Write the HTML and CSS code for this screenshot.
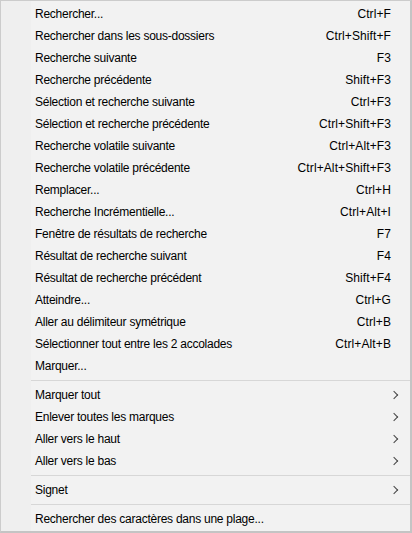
FILE: index.html
```html
<!DOCTYPE html>
<html lang="fr">
<head>
<meta charset="utf-8">
<link rel="stylesheet" href="styles.css">
</head>
<body>
<div class="menu">
  <div class="item"><span class="label">Rechercher...</span><span class="key">Ctrl+F</span></div>
  <div class="item"><span class="label">Rechercher dans les sous-dossiers</span><span class="key">Ctrl+Shift+F</span></div>
  <div class="item"><span class="label">Recherche suivante</span><span class="key">F3</span></div>
  <div class="item"><span class="label">Recherche précédente</span><span class="key">Shift+F3</span></div>
  <div class="item"><span class="label">Sélection et recherche suivante</span><span class="key">Ctrl+F3</span></div>
  <div class="item"><span class="label">Sélection et recherche précédente</span><span class="key">Ctrl+Shift+F3</span></div>
  <div class="item"><span class="label">Recherche volatile suivante</span><span class="key">Ctrl+Alt+F3</span></div>
  <div class="item"><span class="label">Recherche volatile précédente</span><span class="key">Ctrl+Alt+Shift+F3</span></div>
  <div class="item"><span class="label">Remplacer...</span><span class="key">Ctrl+H</span></div>
  <div class="item"><span class="label">Recherche Incrémentielle...</span><span class="key">Ctrl+Alt+I</span></div>
  <div class="item"><span class="label">Fenêtre de résultats de recherche</span><span class="key">F7</span></div>
  <div class="item"><span class="label">Résultat de recherche suivant</span><span class="key">F4</span></div>
  <div class="item"><span class="label">Résultat de recherche précédent</span><span class="key">Shift+F4</span></div>
  <div class="item"><span class="label">Atteindre...</span><span class="key">Ctrl+G</span></div>
  <div class="item"><span class="label">Aller au délimiteur symétrique</span><span class="key">Ctrl+B</span></div>
  <div class="item"><span class="label">Sélectionner tout entre les 2 accolades</span><span class="key">Ctrl+Alt+B</span></div>
  <div class="item"><span class="label">Marquer...</span><span class="key"></span></div>
  <div class="sep"></div>
  <div class="item sub"><span class="label">Marquer tout</span><span class="arrow"></span></div>
  <div class="item sub"><span class="label">Enlever toutes les marques</span><span class="arrow"></span></div>
  <div class="item sub"><span class="label">Aller vers le haut</span><span class="arrow"></span></div>
  <div class="item sub"><span class="label">Aller vers le bas</span><span class="arrow"></span></div>
  <div class="sep"></div>
  <div class="item sub"><span class="label">Signet</span><span class="arrow"></span></div>
  <div class="sep"></div>
  <div class="item"><span class="label">Rechercher des caractères dans une plage...</span><span class="key"></span></div>
</div>
</body>
</html>
```
FILE: styles.css
```css
html, body {
  margin: 0;
  padding: 0;
  background: #f2f2f2;
}
.menu {
  box-sizing: border-box;
  width: 412px;
  height: 533px;
  border: 1px solid #cccccc;
  border-right: 2px solid #c4c4c4;
  border-bottom: 2px solid #c4c4c4;
  background: linear-gradient(to right, #efefef 0, #efefef 30px, #f2f2f2 30px);
  padding-top: 2px;
  font-family: "Liberation Sans", Arial, sans-serif;
  font-size: 12px;
  color: #000;
  display: flex;
  flex-direction: column;
}
.item {
  height: 22px;
  display: flex;
  align-items: center;
  justify-content: space-between;
  padding-left: 34px;
  padding-right: 19px;
}
.label {
  letter-spacing: -0.25px;
}
.key {
  letter-spacing: 0.1px;
}
.item.sub {
  padding-right: 11px;
}
.sep {
  height: 1px;
  background: #d7d7d7;
  margin: 3px 0 3px 30px;
}
.arrow {
  width: 5px;
  height: 5px;
  border-right: 1.3px solid #444;
  border-bottom: 1.3px solid #444;
  transform: rotate(-45deg);
  margin-right: 2px;
}
```
